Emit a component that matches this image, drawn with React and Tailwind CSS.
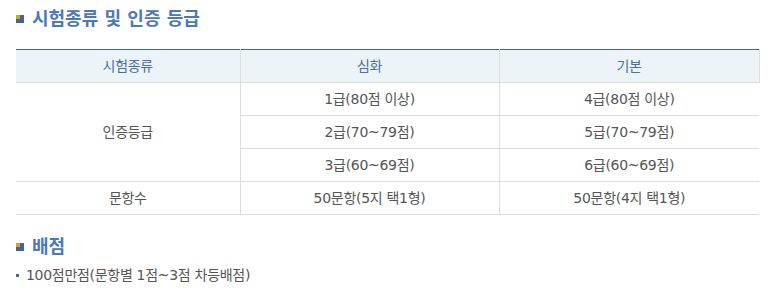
const rows = [
  ["1급(80점 이상)", "4급(80점 이상)"],
  ["2급(70~79점)", "5급(70~79점)"],
  ["3급(60~69점)", "6급(60~69점)"],
];

function TitleIcon() {
  return (
    <span className="relative inline-block w-[8px] h-[8px] bg-[#3f659b] shrink-0">
      <span className="absolute left-0 top-0 w-[4px] h-[4px] bg-[#d7a520]" />
    </span>
  );
}

function SectionTitle({ children, className = "" }) {
  return (
    <h2 className={"flex items-center gap-[8px] text-[18px] leading-[24px] font-bold tracking-normal text-[#4a78b8] " + className}>
      <TitleIcon />
      <span>{children}</span>
    </h2>
  );
}

export default function App() {
  const td = "h-[33px] border-b border-[#dcdcdc] text-center align-middle";
  return (
    <div
      className="w-[772px] h-[291px] bg-white px-[16px] pt-[7px] text-[14px] tracking-[-0.3px] text-[#555]"
      style={{ fontFamily: '"DejaVu Sans", "Noto Sans CJK KR", sans-serif' }}
    >
      <SectionTitle>시험종류 및 인증 등급</SectionTitle>

      <table className="mt-[18px] w-[743px] border-collapse table-fixed">
        <colgroup>
          <col className="w-[224px]" />
          <col className="w-[259px]" />
          <col className="w-[260px]" />
        </colgroup>
        <thead>
          <tr className="bg-[#edf4f8] text-[#4a6fa5] border-t border-[#3d64a0]">
            <th className={td + " font-normal border-r"}>시험종류</th>
            <th className={td + " font-normal border-r"}>심화</th>
            <th className={td + " font-normal border-r"}>기본</th>
          </tr>
        </thead>
        <tbody>
          {rows.map((r, i) => (
            <tr key={i}>
              {i === 0 && (
                <td rowSpan={3} className={td + " border-r"}>
                  인증등급
                </td>
              )}
              <td className={td + " border-r"}>{r[0]}</td>
              <td className={td}>{r[1]}</td>
            </tr>
          ))}
          <tr>
            <td className={td + " border-r"}>문항수</td>
            <td className={td + " border-r"}>50문항(5지 택1형)</td>
            <td className={td}>50문항(4지 택1형)</td>
          </tr>
        </tbody>
      </table>

      <SectionTitle className="mt-[20px]">배점</SectionTitle>
      <ul className="mt-[6px]">
        <li className="flex items-center gap-[7px] leading-[20px]">
          <span className="w-[3px] h-[3px] bg-[#3f659b]" />
          <span>100점만점(문항별 1점~3점 차등배점)</span>
        </li>
      </ul>
    </div>
  );
}
